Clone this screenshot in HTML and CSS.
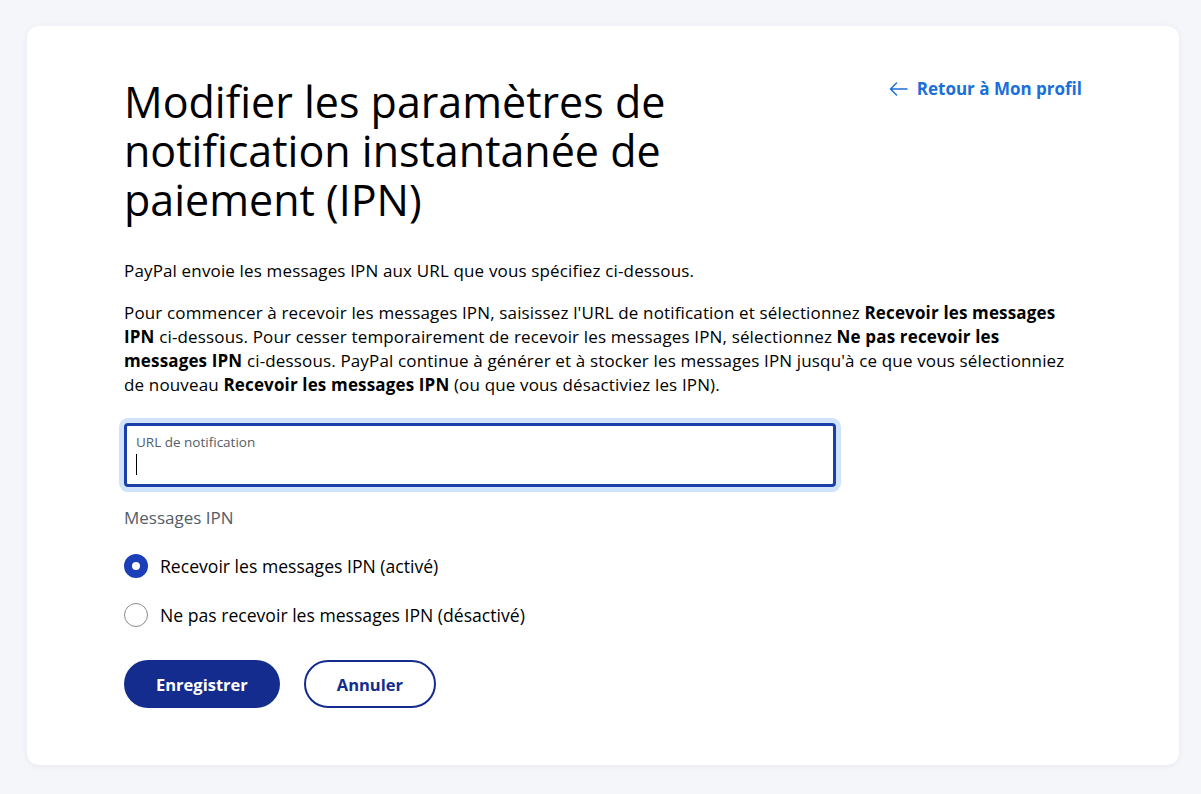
FILE: index.html
```html
<!DOCTYPE html>
<html lang="fr">
<head>
<meta charset="utf-8">
<title>IPN</title>
<link rel="stylesheet" href="styles.css">
</head>
<body>
<main class="card">
  <header class="head">
    <h1 class="title">Modifier les paramètres de notification instantanée de paiement (IPN)</h1>
    <a class="back" href="#"><svg class="back-icon" width="19" height="14" viewBox="0 0 19 14"><path d="M18 7H1.5M7.5 1L1.5 7l6 6" fill="none" stroke="currentColor" stroke-width="1.5" stroke-linecap="round" stroke-linejoin="round"/></svg>Retour à Mon profil</a>
  </header>
  <p class="text first">PayPal envoie les messages IPN aux URL que vous spécifiez ci-dessous.</p>
  <p class="text">Pour commencer à recevoir les messages IPN, saisissez l'URL de notification et sélectionnez <b>Recevoir les messages IPN</b> ci-dessous. Pour cesser temporairement de recevoir les messages IPN, sélectionnez <b>Ne pas recevoir les messages IPN</b> ci-dessous. PayPal continue à générer et à stocker les messages IPN jusqu'à ce que vous sélectionniez de nouveau <b>Recevoir les messages IPN</b> (ou que vous désactiviez les IPN).</p>
  <div class="field">
    <label class="field-label">URL de notification</label>
    <span class="caret"></span>
  </div>
  <div class="group-label">Messages IPN</div>
  <div class="radio"><span class="dot on"></span>Recevoir les messages IPN (activé)</div>
  <div class="radio"><span class="dot"></span>Ne pas recevoir les messages IPN (désactivé)</div>
  <div class="actions">
    <button class="btn primary">Enregistrer</button>
    <button class="btn secondary">Annuler</button>
  </div>
</main>
</body>
</html>
```
FILE: styles.css
```css
html, body { margin: 0; padding: 0; }
body {
  background: #f5f6fa;
  font-family: "Open Sans", Lato, sans-serif;
  color: #001435;
  padding: 26px 22px 29px 27px;
}
.card {
  background: #fff;
  border-radius: 12px;
  box-shadow: 0 1px 6px rgba(0, 20, 80, 0.06);
  padding: 51px 97px 40px 97px;
  height: 739px;
  box-sizing: border-box;
}
.head {
  display: flex;
  justify-content: space-between;
  align-items: flex-start;
}
.title {
  margin: 0;
  font-weight: 400;
  font-size: 43px;
  line-height: 49px;
  max-width: 600px;
  color: #000;
}
.back {
  display: flex;
  align-items: center;
  gap: 9px;
  color: #1a6fd8;
  font-weight: 700;
  font-size: 17px;
  text-decoration: none;
  margin-top: 0;
}
.text {
  margin: 18px 0 0;
  font-size: 17px;
  letter-spacing: 0.15px;
  line-height: 24px;
  color: #000;
}
.text.first { margin-top: 35px; }
.text b { font-weight: 700; }
.field {
  margin-top: 26px;
  width: 712px;
  height: 64px;
  box-sizing: border-box;
  border: 3px solid #1a3fa8;
  border-radius: 4px;
  box-shadow: 0 0 0 5px #d1e3fb;
  padding: 0 9px;
  display: flex;
  flex-direction: column;
}
.field-label {
  font-size: 13.5px;
  color: #545d68;
  margin-top: 8px;
  line-height: 16px;
}
.caret {
  width: 1px;
  height: 21px;
  background: #000;
  margin-top: 4px;
}
.group-label {
  margin-top: 19px;
  font-size: 17px;
  color: #545d68;
  line-height: 24px;
}
.radio {
  display: flex;
  align-items: center;
  gap: 12px;
  font-size: 17.6px;
  font-weight: 500;
  color: #000;
  height: 24px;
  margin-top: 24px;
}
.radio + .radio { margin-top: 25px; }
.dot {
  width: 24px;
  height: 24px;
  border-radius: 50%;
  border: 1px solid #8c8c8c;
  box-sizing: border-box;
  flex-shrink: 0;
}
.dot.on {
  border: 8px solid #1a3fb8;
  background: #fff;
}
.actions {
  display: flex;
  gap: 24px;
  margin-top: 33px;
}
.btn {
  height: 48px;
  border-radius: 24px;
  font-family: inherit;
  font-size: 16.5px;
  font-weight: 700;
  cursor: pointer;
}
.primary {
  background: #142c8e;
  color: #fff;
  border: none;
  padding: 0 32px;
}
.secondary {
  background: #fff;
  color: #142c8e;
  border: 2px solid #142c8e;
  padding: 0 31px;
}
```
